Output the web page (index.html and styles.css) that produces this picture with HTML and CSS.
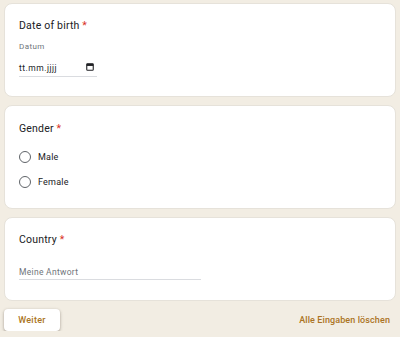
FILE: index.html
```html
<!DOCTYPE html>
<html>
<head>
<meta charset="utf-8">
<link rel="stylesheet" href="styles.css">
</head>
<body>
<div class="page">
  <section class="card card-date">
    <div class="q-title">Date of birth <span class="req">*</span></div>
    <div class="sub-label">Datum</div>
    <div class="date-field">
      <span class="date-text">tt.mm.jjjj</span>
      <svg class="cal" width="8" height="8" viewBox="0 0 8 8"><rect x="0.75" y="0.75" width="6.5" height="6.5" rx="0.8" fill="none" stroke="#202124" stroke-width="1.1"/><rect x="0.75" y="0.75" width="6.5" height="2.2" fill="#202124"/></svg>
    </div>
  </section>
  <section class="card card-gender">
    <div class="q-title">Gender <span class="req">*</span></div>
    <div class="options">
      <label class="option"><span class="radio"></span><span class="opt-text">Male</span></label>
      <label class="option"><span class="radio"></span><span class="opt-text">Female</span></label>
    </div>
  </section>
  <section class="card card-country">
    <div class="q-title">Country <span class="req">*</span></div>
    <div class="text-field">Meine Antwort</div>
  </section>
  <div class="actions">
    <button class="btn-next">Weiter</button>
    <button class="btn-clear">Alle Eingaben löschen</button>
  </div>
</div>
</body>
</html>
```
FILE: styles.css
```css
html, body {
  margin: 0;
  padding: 0;
  background: #f2ede3;
}
body {
  font-family: Roboto, "Noto Sans", Arial, sans-serif;
  color: #202124;
}
.page {
  display: flex;
  flex-direction: column;
  gap: 8px;
  padding: 3px 4px 0 4px;
}
.card {
  background: #fff;
  border: 1px solid #e6e2da;
  border-radius: 8px;
  padding: 0 14px;
  box-sizing: border-box;
}
.q-title {
  font-size: 10.5px;
  line-height: 18px;
  letter-spacing: 0.2px;
}
.req {
  color: #d93025;
}
.card-date {
  height: 94px;
  padding-top: 13px;
}
.sub-label {
  margin-top: 6px;
  font-size: 8px;
  line-height: 12px;
  color: #70757a;
  letter-spacing: 0.4px;
}
.date-field {
  margin-top: 7px;
  width: 75px;
  height: 16px;
  border-bottom: 1px solid #dadce0;
  display: flex;
  align-items: center;
  justify-content: space-between;
  padding-right: 3px;
  box-sizing: content-box;
}
.date-text {
  font-size: 8.5px;
  letter-spacing: 0.5px;
}
.cal { display: block; margin-top: -2px; }
.card-gender {
  height: 104px;
  padding-top: 14px;
}
.options {
  margin-top: 12px;
  display: flex;
  flex-direction: column;
  gap: 11px;
}
.option {
  display: flex;
  align-items: center;
  gap: 7px;
  height: 14px;
}
.radio {
  width: 10px;
  height: 10px;
  border: 1.5px solid #5f6368;
  border-radius: 50%;
  flex: none;
}
.opt-text {
  font-size: 9px;
  letter-spacing: 0.2px;
}
.card-country {
  height: 84px;
  padding-top: 13px;
}
.text-field {
  margin-top: 17px;
  width: 182px;
  font-size: 8.5px;
  line-height: 12px;
  color: #70757a;
  border-bottom: 1px solid #dadce0;
  padding-bottom: 1px;
  letter-spacing: 0.3px;
}
.actions {
  display: flex;
  justify-content: space-between;
  align-items: center;
}
.btn-next {
  width: 56px;
  height: 22px;
  background: #fff;
  border: none;
  border-radius: 4px;
  box-shadow: 0 1px 2px rgba(60, 50, 30, 0.3), 0 1px 3px 1px rgba(60, 50, 30, 0.12);
  color: #ab7424;
  font-family: Roboto, Arial, sans-serif;
  font-size: 9px;
  font-weight: 500;
  letter-spacing: 0.3px;
  padding: 0;
}
.btn-clear {
  background: none;
  border: none;
  color: #ab7424;
  font-family: Roboto, Arial, sans-serif;
  font-size: 9px;
  font-weight: 500;
  letter-spacing: 0.1px;
  padding: 0 6px 0 0;
}
```
